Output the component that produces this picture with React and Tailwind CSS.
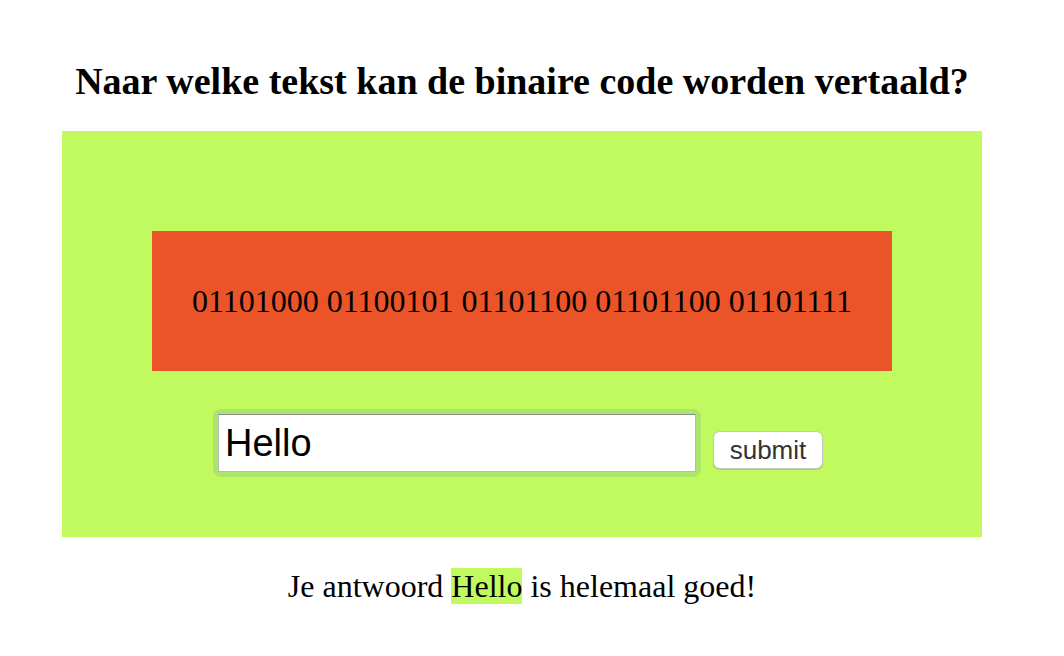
export default function App() {
  return (
    <div className="min-h-screen bg-white font-['Liberation_Serif',serif] text-black">
      <div className="w-[920px] ml-[62px] pt-[59px]">
        <h1 className="text-center text-[38px] font-bold leading-[44px] whitespace-nowrap">
          Naar welke tekst kan de binaire code worden vertaald?
        </h1>
        <div className="mt-[28px] bg-[#c1fa5f] px-[90px] pt-[100px] pb-[60px]">
          <div className="bg-[#eb5428] h-[140px] flex items-center justify-center">
            <span className="text-[32px] leading-none">01101000 01100101 01101100 01101100 01101111</span>
          </div>
          <div className="mt-[38px] pr-[8px] flex items-end justify-center gap-[12px]">
            <div className="rounded-[8px] bg-[#abe56a] p-[5px]">
              <input
                defaultValue="Hello"
                className="block w-[478px] h-[58px] bg-white border border-[#b8b8b8] border-t-[#8a8a8a] px-[6px] font-['Liberation_Sans',sans-serif] text-[38px] text-black outline-none"
              />
            </div>
            <button className="mb-[8px] h-[38px] w-[110px] rounded-[7px] bg-white border border-[#c6c6c6] shadow-[0_1px_1px_rgba(0,0,0,0.15)] font-['Liberation_Sans',sans-serif] text-[26px] leading-none text-[#333]">
              submit
            </button>
          </div>
        </div>
        <p className="mt-[31px] text-center text-[32px] leading-[37px]">
          Je antwoord <span className="bg-[#c1fa5f]">Hello</span> is helemaal goed!
        </p>
      </div>
    </div>
  )
}
